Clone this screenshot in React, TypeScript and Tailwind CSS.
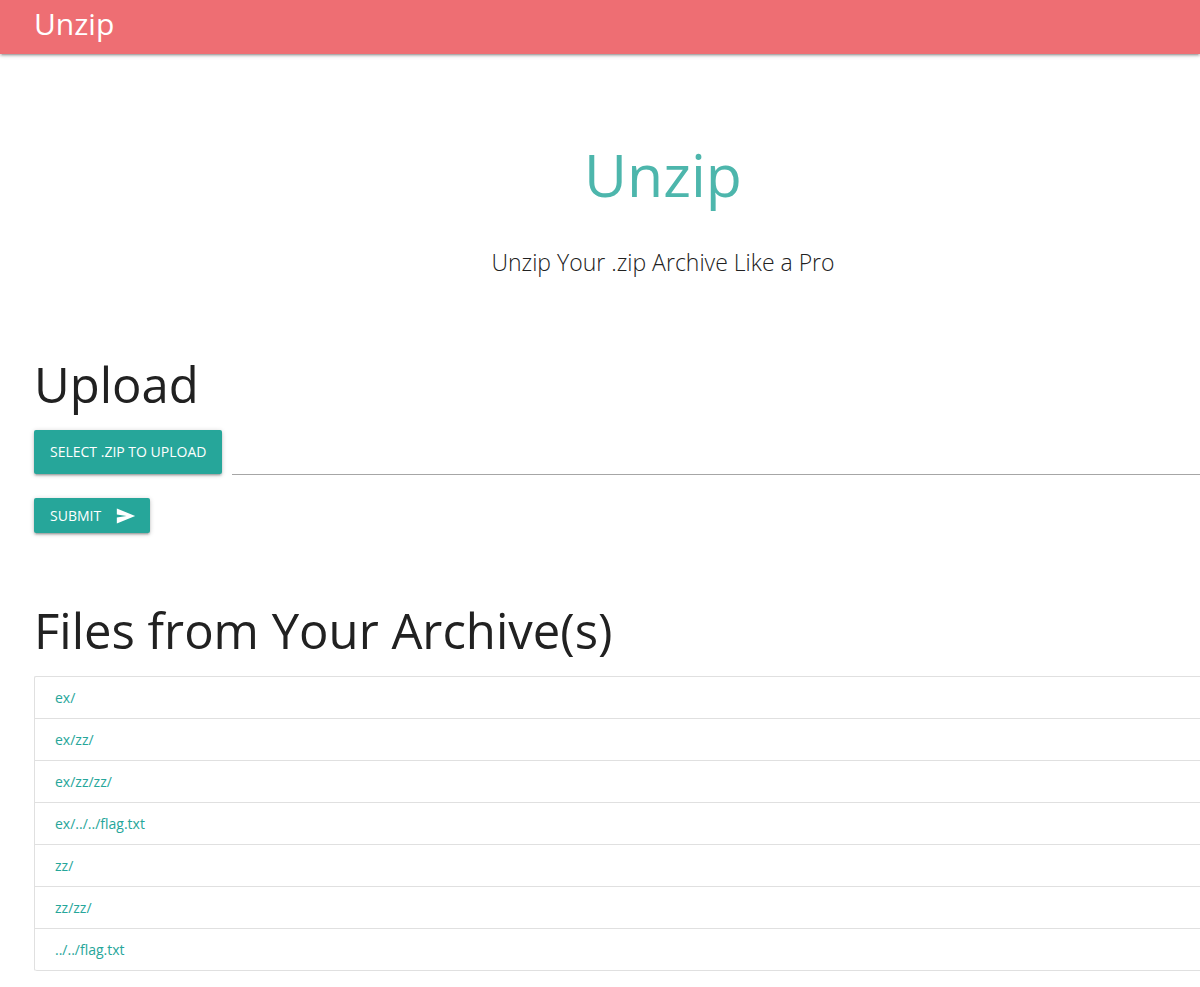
import { useRef, useState } from "react";

const files = [
  "ex/",
  "ex/zz/",
  "ex/zz/zz/",
  "ex/../../flag.txt",
  "zz/",
  "zz/zz/",
  "../../flag.txt",
];

const buttonStyle =
  "flex shrink-0 cursor-pointer items-center rounded-xs bg-[#26a69a] pl-4 text-sm text-white uppercase shadow-[0_2px_2px_0_rgba(0,0,0,0.14),0_3px_1px_-2px_rgba(0,0,0,0.12),0_1px_5px_0_rgba(0,0,0,0.2)]";

function SendIcon() {
  return (
    <svg viewBox="0 0 24 24" className="h-5 w-[22px]" fill="currentColor" preserveAspectRatio="none" aria-hidden="true">
      <path d="M2 21L22 12 2 3v7.2l10.5 1.8-10.5 1.8z" />
    </svg>
  );
}

function UploadForm() {
  const picker = useRef<HTMLInputElement>(null);
  const [name, setName] = useState("");
  return (
    <form onSubmit={(e) => e.preventDefault()}>
      <div className="flex pl-[34px]">
        <button type="button" onClick={() => picker.current?.click()} className={`${buttonStyle} h-11 pr-4`}>
          Select .zip to upload
        </button>
        <input
          ref={picker}
          type="file"
          accept=".zip"
          aria-label="Zip archive"
          className="hidden"
          onChange={(e) => setName(e.target.files?.[0]?.name ?? "")}
        />
        <input
          type="text"
          readOnly
          value={name}
          aria-label="Selected archive"
          className="ml-[10px] h-[45px] min-w-0 flex-1 border-b border-[#a6a6a6] bg-transparent text-base outline-none"
        />
      </div>
      <button type="submit" className={`${buttonStyle} mt-[23px] ml-[34px] h-[35px] gap-[14px] pr-[13px]`}>
        Submit
        <SendIcon />
      </button>
    </form>
  );
}

export default function App() {
  return (
    <div className="overflow-x-hidden bg-white font-['Open_Sans','Noto_Sans',sans-serif] text-[#212121]">
      <nav className="flex h-[54px] items-start bg-[#ee6e73] pl-[34px] shadow-[0_2px_2px_0_rgba(0,0,0,0.14),0_3px_1px_-2px_rgba(0,0,0,0.12),0_1px_5px_0_rgba(0,0,0,0.2)]">
        <a href="#" className="text-[30px] leading-[48px] text-white">
          Unzip
        </a>
      </nav>
      <main>
        <header className="pt-[86px] pl-[126px] text-center">
          <h1 className="text-[59px] leading-[68px] text-[#4db6ac]">Unzip</h1>
          <p className="mt-[38px] text-[23px] leading-8 font-light">Unzip Your .zip Archive Like a Pro</p>
        </header>
        <section className="mt-[72px]">
          <h2 className="mb-3 pl-[34px] text-[49px] leading-[68px]">Upload</h2>
          <UploadForm />
        </section>
        <section className="mt-[63px]">
          <h2 className="mb-3 pl-[34px] text-[49px] leading-[68px]">Files from Your Archive(s)</h2>
          <ul className="ml-[34px] rounded-l-xs border-t border-l border-[#e0e0e0]">
            {files.map((file) => (
              <li key={file} className="border-b border-[#e0e0e0] py-[10px] pl-5 text-sm leading-[21px] last:rounded-bl-xs">
                <a href="#" className="text-[#26a69a]">
                  {file}
                </a>
              </li>
            ))}
          </ul>
        </section>
      </main>
    </div>
  );
}
